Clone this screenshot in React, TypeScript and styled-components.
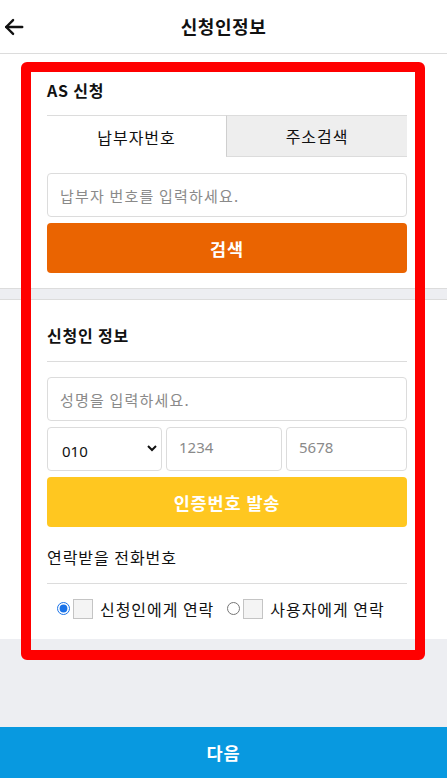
import React from "react";
import styled, { createGlobalStyle } from "styled-components";

const Global = createGlobalStyle`
  html, body { margin: 0; padding: 0; }
  body {
    background: #edeef2;
    font-family: "Noto Sans CJK KR", "Noto Sans", sans-serif;
    letter-spacing: 0.06em;
    color: #111;
  }
  * { box-sizing: border-box; }
`;

const Page = styled.div`
  position: relative;
  min-height: 100vh;
  display: flex;
  flex-direction: column;
  background: #edeef2;
`;

const Header = styled.header`
  height: 54px;
  background: #fff;
  border-bottom: 1px solid #dcdcdc;
  display: flex;
  align-items: center;
  justify-content: center;
  position: relative;
`;

const BackButton = styled.button`
  position: absolute;
  left: 1px;
  top: 14px;
  width: 26px;
  height: 26px;
  padding: 0;
  border: 0;
  background: none;
  display: flex;
  align-items: center;
  justify-content: center;
`;

const Title = styled.h1`
  margin: 0;
  font-size: 18px;
  letter-spacing: 0.03em;
  font-weight: 700;
  line-height: 22px;
  margin-top: -2px;
`;

const Section = styled.section<{ $top: number; $bottom: number }>`
  background: #fff;
  padding: ${(p) => p.$top}px 40px ${(p) => p.$bottom}px 47px;
  display: flex;
  flex-direction: column;
`;

const Divider = styled.div`
  height: 12px;
  background: #edeef2;
  border-top: 1px solid #dcdcdc;
  border-bottom: 1px solid #dcdcdc;
`;

const SectionTitle = styled.h2<{ $weight?: number; $underline?: boolean }>`
  margin: 0;
  font-size: 16px;
  letter-spacing: 0.05em;
  font-weight: ${(p) => p.$weight ?? 700};
  line-height: 22px;
  ${(p) =>
    p.$underline
      ? `padding-bottom: 15px; border-bottom: 1px solid #dcdcdc;`
      : ``}
`;

const Tabs = styled.div`
  display: grid;
  grid-template-columns: 179px 1fr;
  height: 42px;
  margin-top: 14px;
`;

const Tab = styled.button<{ $active: boolean }>`
  border: 0;
  font-family: inherit;
  font-size: 16px;
  letter-spacing: 0.06em;
  color: #111;
  padding: 0;
  border-top: 1px solid #dcdcdc;
  background: ${(p) => (p.$active ? "#fff" : "#eeeeee")};
  border-left: ${(p) => (p.$active ? "0" : "1px solid #cfcfcf")};
  border-bottom: ${(p) => (p.$active ? "0" : "1px solid #dcdcdc")};
`;

const Input = styled.input<{ $mt?: number }>`
  width: 100%;
  height: 44px;
  margin-top: ${(p) => p.$mt ?? 0}px;
  border: 1px solid #dcdcdc;
  border-radius: 4px;
  padding: 0 12px;
  font-family: inherit;
  font-size: 15px;
  letter-spacing: 0.08em;
  color: #111;
  background: #fff;
  outline: none;
  &::placeholder { color: #8a8a8a; }
`;

const ActionButton = styled.button<{ $bg: string }>`
  width: 100%;
  height: 50px;
  margin-top: 6px;
  border: 0;
  border-radius: 4px;
  background: ${(p) => p.$bg};
  color: #fff;
  font-family: inherit;
  font-size: 17.5px;
  letter-spacing: 0.05em;
  font-weight: 700;
`;

const PhoneRow = styled.div`
  display: grid;
  grid-template-columns: 115px 116px 1fr;
  gap: 4px;
  margin-top: 6px;
`;

const SelectWrap = styled.div`
  position: relative;
  height: 44px;
`;

const Select = styled.select`
  width: 100%;
  height: 44px;
  border: 1px solid #dcdcdc;
  border-radius: 4px;
  padding: 4px 0 0 14px;
  font-family: "Noto Sans", sans-serif;
  font-size: 15px;
  letter-spacing: 0;
  color: #111;
  background: #fff;
  appearance: none;
  outline: none;
`;

const Chevron = styled.svg`
  position: absolute;
  right: 4px;
  top: 15px;
  pointer-events: none;
`;

const PhoneInput = styled(Input)`
  font-family: "Noto Sans", sans-serif;
  letter-spacing: 0;
  padding-left: 12px;
  padding-bottom: 4px;
`;

const ContactTitle = styled(SectionTitle)`
  margin-top: 19px;
  letter-spacing: 0.06em;
`;

const RadioRow = styled.div`
  display: flex;
  align-items: center;
  gap: 13px;
  padding: 6px 0 0 10px;
  height: 43px;
`;

const RadioLabel = styled.label`
  display: flex;
  align-items: center;
  font-size: 16px;
  letter-spacing: 0.06em;
  line-height: 22px;
`;

const Radio = styled.input`
  width: 13px;
  height: 13px;
  margin: 0 3px 0 0;
  accent-color: #1a73e8;
`;

const Box = styled.span`
  width: 20px;
  height: 20px;
  background: #f4f4f4;
  border: 1px solid #c4c4c4;
  margin-right: 7px;
`;

const SectionEnd = styled.div`
  height: 12px;
`;

const Spacer = styled.div`
  flex: 1;
`;

const Footer = styled.button`
  height: 51px;
  width: 100%;
  border: 0;
  background: #0899e0;
  color: #fff;
  font-family: inherit;
  font-size: 17.5px;
  letter-spacing: 0.05em;
  font-weight: 700;
`;

const Annotation = styled.div`
  position: absolute;
  left: 21px;
  top: 62px;
  width: 404px;
  height: 598px;
  border: 10px solid #ff0000;
  border-radius: 6px;
  pointer-events: none;
`;

export default function App() {
  return (
    <Page>
      <Global />
      <Header>
        <BackButton aria-label="back">
          <svg width="22" height="22" viewBox="0 0 24 24" fill="none" stroke="#111" strokeWidth="2.6" strokeLinecap="round" strokeLinejoin="round">
            <path d="M21 12H3.5" />
            <path d="M11 4.5L3.5 12L11 19.5" />
          </svg>
        </BackButton>
        <Title>신청인정보</Title>
      </Header>

      <Section $top={25} $bottom={15}>
        <SectionTitle>AS 신청</SectionTitle>
        <Tabs>
          <Tab $active>납부자번호</Tab>
          <Tab $active={false}>주소검색</Tab>
        </Tabs>
        <Input $mt={16} placeholder="납부자 번호를 입력하세요." />
        <ActionButton $bg="#ea6401">검색</ActionButton>
      </Section>

      <Divider />

      <Section $top={24} $bottom={0}>
        <SectionTitle $underline>신청인 정보</SectionTitle>
        <Input $mt={15} placeholder="성명을 입력하세요." />
        <PhoneRow>
          <SelectWrap>
            <Select defaultValue="010">
              <option value="010">010</option>
              <option value="011">011</option>
              <option value="016">016</option>
            </Select>
            <Chevron width="12" height="12" viewBox="0 0 12 12">
              <path d="M2 4L6 8L10 4" fill="none" stroke="#111" strokeWidth="2" />
            </Chevron>
          </SelectWrap>
          <PhoneInput placeholder="1234" />
          <PhoneInput placeholder="5678" />
        </PhoneRow>
        <ActionButton $bg="#ffc720">인증번호 발송</ActionButton>
        <ContactTitle $weight={400} $underline>연락받을 전화번호</ContactTitle>
        <RadioRow>
          <RadioLabel>
            <Radio type="radio" name="contact" defaultChecked />
            <Box />
            신청인에게 연락
          </RadioLabel>
          <RadioLabel>
            <Radio type="radio" name="contact" />
            <Box />
            사용자에게 연락
          </RadioLabel>
        </RadioRow>
        <SectionEnd />
      </Section>
      <Spacer />
      <Footer>다음</Footer>
      <Annotation />
    </Page>
  );
}
